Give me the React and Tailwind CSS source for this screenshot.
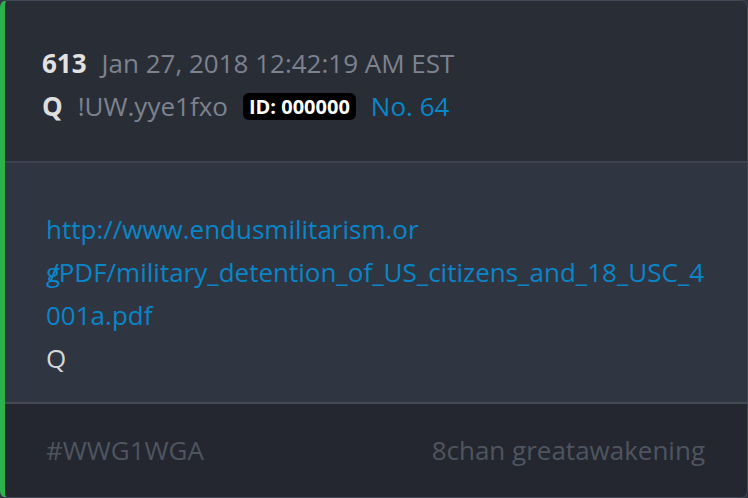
export default function App() {
  return (
    <div className="w-[748px] h-[498px] bg-[#2e3440]" style={{ fontFamily: '"Open Sans", sans-serif' }}>
      <div className="w-full h-full flex flex-col rounded-[7px] border border-[#424855] border-l-[5px] border-l-[#2cb24c] overflow-hidden">
        <div className="h-[162px] shrink-0 bg-[#292d36] border-b-2 border-[#3d434f] pl-[37px] pt-[42px]">
          <div className="flex items-baseline h-[40px] text-[26px] leading-[40px]">
            <span className="font-bold text-[#e2e2e2]">613</span>
            <span className="ml-[15px] text-[#7d828f]">Jan 27, 2018 12:42:19 AM EST</span>
          </div>
          <div className="flex items-center h-[40px] text-[26px] leading-[40px] mt-[3px]">
            <span className="font-bold text-[#dedede]">Q</span>
            <span className="ml-[15px] text-[#7d828f]">!UW.yye1fxo</span>
            <span className="ml-[15px] bg-black text-white font-bold text-[20px] leading-[27px] px-[6px] rounded-[6px]">ID: 000000</span>
            <span className="ml-[15px] text-[#0a86c8]">No. 64</span>
          </div>
        </div>
        <div className="h-[241px] shrink-0 bg-[#2f3541] border-b-2 border-[#444a56] pl-[41px] pt-[45px]">
          <div className="text-[26px] leading-[43px] text-[#0a86c8]">
            <div>http://www.endusmilitarism.or</div>
            <div className="whitespace-nowrap">g<span className="ml-[-11px]">/PDF/military_detention_of_US_citizens_and_18_USC_4</span></div>
            <div>001a.pdf</div>
          </div>
          <div className="text-[26px] leading-[43px] text-[#d6d6d6]">Q</div>
        </div>
        <div className="flex-1 bg-[#24272f] pl-[41px] pr-[42px] flex items-center justify-between text-[26px] text-[#4f5560] pb-[1px]">
          <span>#WWG1WGA</span>
          <span>8chan greatawakening</span>
        </div>
      </div>
    </div>
  );
}
